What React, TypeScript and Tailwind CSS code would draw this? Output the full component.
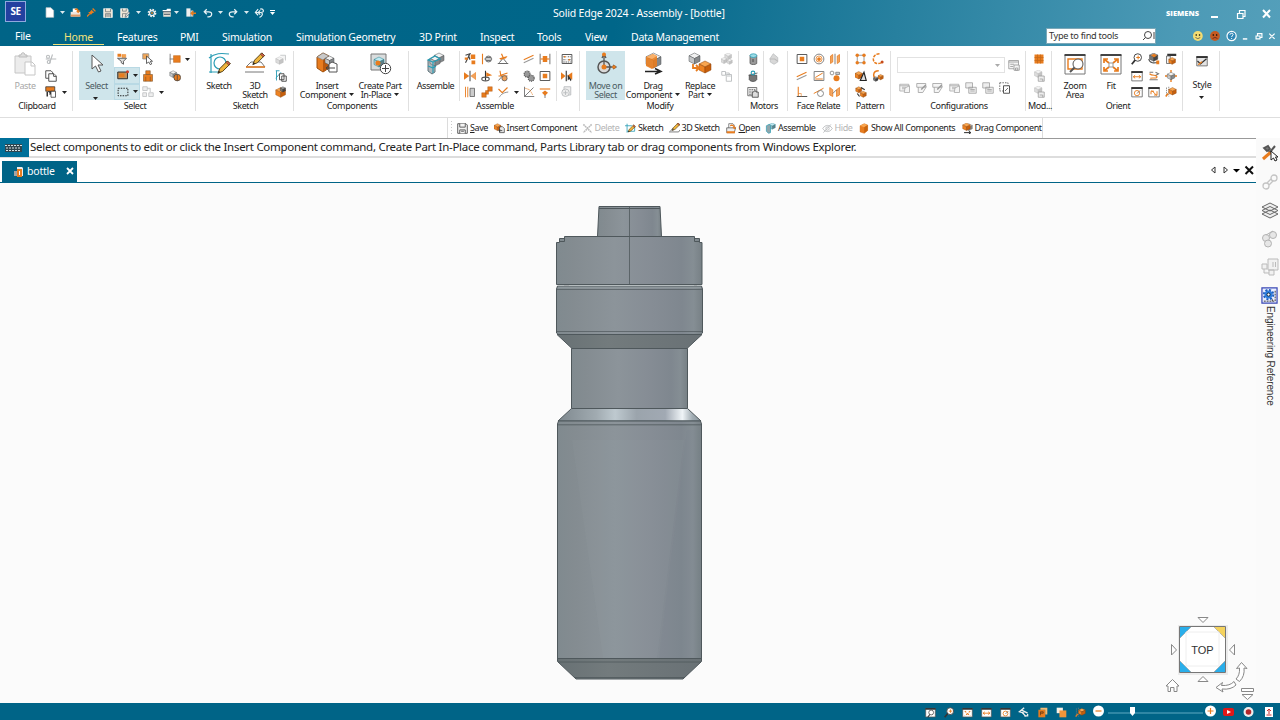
import React from "react";

const O = "#e87c1e";
const D = "#4a4a4a";
const G = "#b9bcbe";
const T = "#2a9db5";

function Cube({ x, y, s, c = "orange" }: { x: number; y: number; s: number; c?: string }) {
  const p: Record<string, string[]> = {
    orange: ["#f9a650", "#ee8322", "#c75f0c", "#8c4308"],
    gray: ["#f1f1f1", "#c4c6c8", "#85888a", "#4f5254"],
    pale: ["#f2f2f2", "#dcdcdc", "#c4c4c4", "#b0b0b0"],
    dark: ["#a8a8a8", "#777", "#444", "#2f2f2f"],
    teal: ["#bfe9f2", "#a9c3ca", "#5f7f88", "#23808f"],
  };
  const [a, b, d, e] = p[c];
  const h = s / 2;
  const q = s / 4;
  return (
    <g transform={`translate(${x} ${y})`} stroke={e} strokeWidth=".5" strokeLinejoin="round">
      <path d={`M0 ${q}L${h} 0L${s} ${q}L${h} ${h}Z`} fill={a} />
      <path d={`M0 ${q}L${h} ${h}V${s}L0 ${s - q}Z`} fill={b} />
      <path d={`M${s} ${q}L${h} ${h}V${s}L${s} ${s - q}Z`} fill={d} />
    </g>
  );
}

const Pencil = ({ t = "" }: { t?: string }) => (
  <g transform={t} strokeLinejoin="round">
    <path d="M2 14L4 9L12 1L15 4L7 12Z" fill="#efb53c" stroke="#4d3a16" />
    <path d="M10.5 2.5L12 1L15 4L13.5 5.500Z" fill="#d9604f" stroke="#4d3a16" strokeWidth=".7" />
    <path d="M2 14L3 11.300L4.700 13Z" fill="#222" />
  </g>
);

const Box = ({ c = D, f = "#fff" }: { c?: string; f?: string }) => (
  <path d="M1.500 2H14.500V14H1.500Z" fill={f} stroke={c} strokeWidth="1.200" />
);

const Win = () => (
  <g>
    <path d="M1 2H15V14.500H1Z" fill="#fff" stroke="#555" />
    <path d="M.5 1.500H15.500V4H.5Z" fill="#333" />
  </g>
);

const icons: Record<string, React.ReactNode> = {
  cut: <g fill="none" stroke={G} strokeWidth="1.500"><path d="M1 8H15M10 2L8 8L6 14" /><circle cx="4" cy="5" r="2" /><circle cx="5" cy="12" r="2" /></g>,
  copy: <g fill="#fff" stroke="#444" strokeWidth="1.200"><path d="M1 1H8L10 3V11H1Z" /><path d="M5 5H12L15 8V15H5Z" /><path d="M11.500 5V8.500H15" /></g>,
  fmt: <g><path d="M1 1H13V7H1Z" fill={O} stroke="#333" /><path d="M3 7H12V9L6 12V9Z" fill="#333" /><path d="M8 7H14V15H8Z" fill="#fff" stroke="#333" /><path d="M3 8V14" stroke="#333" strokeWidth="2" /></g>,
  filter: <g><path d="M2 1H7V5H2Z" fill={O} /><path d="M8 2H13V6H8Z" fill="#f4a14c" stroke={O} strokeWidth=".6" /><path d="M2 7H14L10 11V15L7 13V11Z" fill="#ddd" stroke="#555" strokeWidth="1.200" /></g>,
  rect: <g><path d="M1 4H14V13H1Z" fill="#c4935c" stroke="#222" strokeWidth="1.200" /><path d="M3 6H10V11H3Z" fill={O} /><circle cx="14" cy="3.500" r="2" fill="#d33d22" /></g>,
  dash: <path d="M1.500 3H14.500V13H1.500Z" fill="none" stroke="#222" strokeWidth="1.300" strokeDasharray="2 1.500" />,
  selcube: <g><path d="M1 1H9V8H1Z" fill="#f3a757" stroke="#888" /><path d="M6 4V14L9 12L11 15.500L13 14.500L11 11H14Z" fill="#fff" stroke="#333" /></g>,
  body: <g fill={O} stroke="#6e4a24" strokeWidth=".7"><path d="M5 1H11V6H5Z" /><path d="M2 6H14V15H2Z" /><path d="M5 9V15M11 9V15" fill="none" /></g>,
  ghost: <g fill="#eee" stroke={G}><path d="M1 1H7V6H1ZM1 9H6V14H1ZM9 9H15V14H9ZM7 3H11V8" /></g>,
  tag: <g><path d="M1.500 1V15M1 8H7" stroke="#777" strokeWidth="1.200" /><path d="M6 3.500H15V12.500H6Z" fill={O} stroke="#b55d0f" strokeWidth=".6" /></g>,
  pair: <g><Cube x={1} y={1} s={9} c="gray" /><circle cx="11" cy="10" r="4.500" fill={O} stroke="#444" /><path d="M11 5.500V14.500" stroke="#444" /></g>,
  paleCube: <g><Cube x={1} y={5} s={10} c="pale" /><path d="M7 3H14V10" fill="#f3f3f3" stroke={G} /></g>,
  skcopy: <g fill="none" stroke={T} strokeWidth="1.200"><path d="M1 1H6M2 1V14M1 11L8 3" /><path d="M6 5H12V13H6ZM9 8H15V15H9Z" fill="#fff" stroke="#444" /></g>,
  ballcube: <g><Cube x={1} y={2} s={13} /><Cube x={7} y={1} s={7} c="dark" /></g>,
  a1: <g><path d="M2 3L8 1L5 7L2 13M6 3L8 9" stroke="#444" fill="none" strokeWidth="1.500" /><path d="M9 2H15V8H9ZM10 10H15V15H10Z" fill={O} /><path d="M1 6H5V9H1Z" fill={O} /></g>,
  a2: <g fill="none"><path d="M2 1V15" stroke={O} strokeWidth="1.500" /><path d="M4 8H16" stroke="#888" strokeDasharray="2 1" /><circle cx="10" cy="8" r="4" fill="#ccc" stroke="#555" /><path d="M7 6H13M7 10H13" stroke="#555" /></g>,
  a3: <g><path d="M1 14H15M3 13L8 7L13 13" fill="none" stroke="#666" strokeWidth="1.300" /><path d="M6 1L9 8" stroke={O} strokeWidth="1.600" /><path d="M3 7L14 4L12 7L5 9Z" fill={O} /></g>,
  mate: <g><path d="M0 3L7 8L0 13Z" fill={O} /><path d="M16 3L9 8L16 13Z" fill="#f3a25b" stroke={O} strokeWidth=".5" /><path d="M8 1V15" stroke="#555" strokeWidth="1.500" /></g>,
  flag: <g><path d="M6 1V14" stroke="#333" strokeWidth="1.500" /><path d="M7 3L15 7L7 9Z" fill={O} /><ellipse cx="6" cy="12" rx="5" ry="2.500" fill="none" stroke="#555" strokeWidth="1.400" /></g>,
  ang: <g><path d="M4 1L5 7L14 4M2 8H14" stroke={O} strokeWidth="1.500" fill="none" /><circle cx="10" cy="11" r="3.500" fill="#f2a25a" stroke="#555" /><path d="M2 14L7 8" stroke="#555" /></g>,
  par: <g><path d="M2 1V15M5 1V15" stroke={O} strokeWidth="1.200" /><path d="M8 3H14V14H8Z" fill="#ccc" stroke="#555" /></g>,
  steps: <g fill={O} stroke="#a55412" strokeWidth=".5"><path d="M9 1H15V7H9ZM6 6H10V11H6ZM1 9H7V15H1Z" /></g>,
  arc: <g fill="none"><path d="M2 4L7 9L14 2" stroke={O} strokeWidth="1.500" /><path d="M3 15C5 12 7 9 15 8" stroke="#888" strokeWidth="1.200" /></g>,
  lines: <g strokeWidth="1.500"><path d="M1 9L14 3" stroke={O} /><path d="M1 13L14 7" stroke="#999" /></g>,
  gears: <g fill="#999" stroke="#555" strokeWidth="1.500" strokeDasharray="1.500 1"><circle cx="5.500" cy="5.500" r="4" /><circle cx="11" cy="11" r="4" /></g>,
  graph: <g fill="none" stroke="#555"><path d="M2 1V14H15M2 14L14 2" /><path d="M3 3L9 5L13 12" stroke={O} strokeDasharray="2 1" /></g>,
  between: <g><path d="M1.500 1V15M14.500 1V15" stroke="#666" strokeWidth="1.200" /><path d="M5 4H11V12H5Z" fill={O} /><path d="M2 8H14" stroke={O} strokeWidth="1.500" /></g>,
  square: <g><Box /><path d="M5 5H11V11H5Z" fill={O} /></g>,
  ground: <g><path d="M1 4H15" stroke={O} strokeWidth="1.500" /><path d="M4 9L8 6L12 9L8 13Z" fill={O} /><path d="M8 12V16" stroke="#555" /></g>,
  table: <g><Box /><path d="M3 5H7M9 5H13M3 9H7M9 9H13M3 12H13" stroke="#555" strokeWidth="1.200" strokeDasharray="2 1" /><path d="M4 4H6V6H4ZM10 8H12V10H10Z" fill={O} /></g>,
  matesel: <g><path d="M0 3L6 8L0 13Z" fill={O} /><path d="M15 3L8 8L15 13Z" fill={O} /><path d="M7 1V15" stroke="#333" strokeWidth="1.500" /><path d="M9 6V14L11 12L13 15L14 13Z" fill="#333" /></g>,
  palebox: <g fill="#eee" stroke={G} strokeWidth="1.200"><path d="M4 1H13V12H4Z" /><circle cx="6" cy="9" r="5" /><path d="M3 9H9M6 6V12" /></g>,
  pcubes: <g><Cube x={5} y={0} s={9} c="pale" /><Cube x={0} y={6} s={8} c="pale" /><Cube x={8} y={8} s={7} c="pale" /></g>,
  pswap: <g fill="none" stroke={G} strokeWidth="1.200"><path d="M7 6H14V15H7ZM1 2H6V7H1ZM6 4H11V6" /><path d="M8 8H13" /></g>,
  motor: <g><path d="M4 3V14C6 16 11 16 13 14V3Z" fill="#999" stroke="#555" /><ellipse cx="8.500" cy="3.500" rx="4.500" ry="2.500" fill="#9bdbe6" stroke={T} /><path d="M8 8V12" stroke="#333" /></g>,
  motor2: <g><path d="M3 7V13C5 16 11 16 13 13V7Z" fill="#777" stroke="#444" /><path d="M2 7L14 4" stroke="#444" /><circle cx="8" cy="4" r="2.500" fill="none" stroke={T} strokeWidth="1.500" /></g>,
  keypad: <g><path d="M1 2H13V13H1Z" fill="#eee" stroke="#555" /><path d="M3 5H12M3 8H12M3 11H9" stroke="#333" strokeDasharray="2 1" /><path d="M7 9V15H15V8H12L11 6Z" fill="#ddd" stroke="#333" /></g>,
  drop: <g><path d="M7 1L13 6V12L8 15L3 12V7Z" fill="#d8d8d8" stroke={G} /><path d="M2 8H9L13 11" stroke="#bbb" strokeWidth="1.500" fill="none" /></g>,
  circ: <g><circle cx="8" cy="8" r="6.500" fill="#fff" stroke="#777" strokeWidth="1.200" /><circle cx="8" cy="8" r="4" fill="none" stroke={O} /><circle cx="8" cy="8" r="2.500" fill={O} /></g>,
  stripes: <g><path d="M2 4L5 2V12L2 14ZM11 4L14 2V12L11 14Z" fill="#f0a35e" stroke={O} /><path d="M8 1V15" stroke="#555" /></g>,
  boxline: <g><Box c="#777" /><path d="M3 10L13 4M3 12H13" stroke={O} strokeWidth="1.300" /></g>,
  dots: <g><circle cx="4" cy="4" r="2.500" fill="#fff" stroke="#777" /><path d="M9 3H14V6H9Z" fill="#ccc" stroke="#777" /><circle cx="10" cy="11" r="4" fill={O} /></g>,
  perp: <g fill="none" strokeWidth="1.400"><path d="M3 1V14" stroke={O} /><path d="M1 14H15" stroke="#555" /><path d="M3 10H7V14" stroke={O} strokeWidth=".8" /></g>,
  tangent: <g fill="none" strokeWidth="1.300"><path d="M1 10L14 3" stroke={O} /><circle cx="10" cy="10" r="4" stroke="#888" /></g>,
  sym: <g fill="#f1a765" stroke={O}><path d="M1 2L5 5V14L1 12ZM14 2L10 5V14L14 12Z" /><path d="M5 10L10 5" stroke="#555" fill="none" /></g>,
  patt: <g fill={O}><path d="M3 3H12V13H3Z" fill="none" stroke="#777" /><circle cx="3" cy="3" r="2.300" /><circle cx="12" cy="3" r="2.300" /><circle cx="3" cy="13" r="2.300" /><circle cx="12" cy="13" r="2.300" /></g>,
  curve: <g><path d="M10 1C1 1 0 10 4 13C8 15 11 14 14 12" fill="none" stroke={O} strokeWidth="2" strokeDasharray="4 1.500" /><circle cx="13.500" cy="12" r="2" fill="#c64b1a" /></g>,
  mirror: <g><Cube x={0} y={2} s={10} /><path d="M7 14L12 3L15 14Z" fill="#ddd" stroke="#222" strokeWidth="1.500" /></g>,
  curve2: <g><path d="M9 1C0 1 1 11 6 11" fill="none" stroke={O} strokeWidth="2" /><Cube x={8} y={6} s={7} /><Cube x={2} y={9} s={6} c="dark" /></g>,
  ocubes: <g><Cube x={1} y={1} s={8} /><Cube x={7} y={7} s={8} /><path d="M3 10L6 14M8 2L13 5" stroke="#333" strokeWidth="1.500" /></g>,
  cfg: <g fill="#f5f5f5" stroke="#a3a3a3"><path d="M1 3H13V12H1ZM1 5H13M4 7H9M4 9H8" /><path d="M8 8L14 5V14H7Z" /></g>,
  cfg2: <g fill="#f5f5f5" stroke="#999"><path d="M1 2H13V7H1ZM3 7V14H9L14 6" /><path d="M7 10L13 4" strokeWidth="2" /></g>,
  cfg3: <g fill="#eee" stroke="#999"><path d="M1 1H10V8H1ZM5 7H15V15H5Z" /><path d="M7 10H13M7 12H13" /></g>,
  cfg4: <g><path d="M1 1H12V12H1Z" fill="none" stroke="#444" strokeDasharray="2 1.500" /><path d="M6 5H14V15H6Z" fill="#fff" stroke="#444" strokeWidth="1.200" /><path d="M8 12L12 8" stroke="#444" /></g>,
  listsave: <g fill="#f5f5f5" stroke="#999" strokeWidth="1.100"><path d="M1 2H14V13H1ZM1 4H14M3 7H8M3 10H7" /><path d="M8 8H15V15H8ZM10 12H13V15H10Z" /></g>,
  ogrid: <g><path d="M2 2H14V14H2Z" fill={O} /><path d="M6 2V14M10 2V14M2 6H14M2 10H14" stroke="#c46a1a" /></g>,
  pmod: <g><Cube x={2} y={0} s={10} c="pale" /><path d="M7 8H15V15H7Z" fill="#eee" stroke="#999" /><path d="M9 12H13V15" fill="none" stroke="#999" /></g>,
  zoom: <g><circle cx="9" cy="6" r="5" fill="#fff" stroke="#444" strokeWidth="1.300" /><path d="M5.500 9.500L1 15" stroke="#333" strokeWidth="2.300" /><path d="M7 6H12M9.500 3.500V8.500" stroke={O} strokeWidth="1.300" /></g>,
  rotc: <g><Cube x={2} y={0} s={11} c="dark" /><path d="M4 3L8 1L12 3L8 6Z" fill={O} /><path d="M1 8C2 14 9 14 13 12" fill="none" stroke="#555" strokeWidth="1.500" /><path d="M11 10H15V15H11Z" fill={O} /></g>,
  wincube: <g><path d="M3 1H15V4H3Z" fill="#333" /><path d="M2 4H7V14H2Z" fill="#f4f4f4" stroke="#555" /><Cube x={5} y={6} s={9} /></g>,
  width: <g><Win /><path d="M3 9H13M5.500 7L3 9L5.500 11M10.500 7L13 9L10.500 11" fill="none" stroke={O} strokeWidth="1.300" /></g>,
  spin: <g fill="none" strokeWidth="1.500"><path d="M2 3H7M10 3L14 5L9 8M2 13H13" stroke="#777" /><path d="M2 5C6 9 11 5 12 9C12 12 6 10 3 11" stroke={O} /></g>,
  cross: <g><path d="M8 0V16M0 8H16" stroke={O} strokeWidth="1.800" /><Cube x={3} y={3} s={10} c="gray" /></g>,
  wcirc: <g><Win /><circle cx="8" cy="9.500" r="3.500" fill="none" stroke={O} strokeWidth="1.200" /><path d="M8 10L12 6" stroke="#555" /></g>,
  wref: <g><Win /><path d="M4 11V7H8M12 7V12H8M5 6L12 13" fill="none" stroke={O} strokeWidth="1.300" /></g>,
  fitw: <g><Win /><path d="M4 6L12 13M12 6L4 13" stroke={O} strokeWidth="1.500" strokeDasharray="3 2" /></g>,
  zoomw: <g><Win /><circle cx="9" cy="8" r="3.500" fill="#fff" stroke="#333" /><path d="M7 11L4 15" stroke="#333" strokeWidth="1.500" /></g>,
  shade: <g><path d="M2 2V14M5 1V14" stroke="#777" strokeDasharray="2 1" /><Cube x={5} y={2} s={10} /><path d="M1 14L4 10" stroke={O} strokeWidth="2" /></g>,
  style: <g><path d="M1 2H15V14.500H1Z" fill="#e4e4e4" stroke="#555" /><path d="M.5 1.500H15.500V4H.5Z" fill="#333" /><path d="M2 8L6 12L14 5" fill="none" stroke="#333" strokeWidth="1.600" /><path d="M3 13L8 9" stroke={O} strokeWidth="2" /></g>,
  save: <g fill="#f4f4f4" stroke="#444" strokeWidth="1.200"><path d="M1 1H13L15 3V15H1Z" /><path d="M4 1V6H12V1M4 15V10H12V15M6 12H10" /></g>,
  insert: <g><Cube x={0} y={1} s={10} /><path d="M8 6L12 5L15 8V14H8Z" fill="#e6e6e6" stroke="#333" /><path d="M7 11H12M9 9L7 11L9 13" stroke="#222" fill="none" /></g>,
  del: <path d="M2 2L14 14M14 2L2 14" stroke="#bbb" strokeWidth="2.200" strokeDasharray="2.500 .8" />,
  sketch: <g><path d="M0 4H10M3 1V14M3 12H14V5" fill="none" stroke={T} strokeWidth="1.200" /><Pencil t="translate(3 2) scale(.8)" /></g>,
  sk3d: <g><path d="M0 13H14L16 10M2 12L6 7" fill="none" stroke="#666" strokeWidth="1.200" /><Pencil t="translate(3 -1) scale(.85)" /></g>,
  open: <g><path d="M4 1H10L12 3V8H4Z" fill="#fff" stroke="#555" /><path d="M1 7H14L12 14H1Z" fill="#eee" stroke="#444" /><path d="M6 3C8 1 12 2 13 6L15 5L13 9L9 7L11 6C10 4 8 4 6 5Z" fill={O} /><path d="M1 12H13V15H1Z" fill={O} /></g>,
  openW: <g><path d="M4 2H9L11 4V8H4Z" fill="#fff" /><path d="M1 7H15V14H1Z" fill="#eee6de" /><path d="M7 3C9 1 12 2 12.500 5L15 5L12 9L9 6L10.500 5.500C10 4 8 4 7 4.500Z" fill={O} /><path d="M1 11H15V14H1Z" fill="#e09a66" /></g>,
  asm: <g><Cube x={6} y={0} s={9} c="teal" /><path d="M2 4L6 2L8 4V14L5 15L2 12Z" fill="#8fa6ac" stroke={T} /></g>,
  hide: <g fill="none" stroke={G} strokeWidth="1.300"><path d="M1 8C5 2 11 2 15 8C11 14 5 14 1 8Z" /><circle cx="8" cy="8" r="2.500" /><path d="M2 14L13 2" /></g>,
  show: <g><path d="M3 4L9 1L14 3V11L9 15L3 13Z" fill={O} stroke="#c4600d" strokeWidth=".6" /><path d="M3 4L9 1L14 3L9 6Z" fill="#f9a650" /><path d="M14 3L9 6V15L14 11Z" fill="#c9650f" /></g>,
  dragc: <g><Cube x={5} y={1} s={10} c="gray" /><Cube x={1} y={0} s={11} /><path d="M3 14H12M10 12L13 14L10 16" stroke="#222" fill="none" strokeWidth="1.400" /></g>,
  page: <path d="M3 1H10L14 5V15H3Z" fill="#fff" stroke="#ccc" />,
  pin: <g><path d="M8 3L13 8L10 9L7 12L5 10L2 7L5 7Z" fill={O} /><path d="M10 1L15 6M5 10L0 15" stroke={O} strokeWidth="2.500" /></g>,
  saveW: <g fill="#f1e5d5" stroke="#fff"><path d="M1 1H13L15 3V15H1Z" /><path d="M4 1V6H12V1M4 15V9H12V15" stroke="#51606a" /><path d="M5 11H11M5 13H11" stroke="#51606a" /></g>,
  saveAs: <g fill="#f1e5d5" stroke="#fff"><path d="M1 1H12L13 3V15H1Z" /><path d="M4 1V5H10V1M4 15V9H10V15" stroke="#51606a" /><path d="M8 15L9 11L14 6L16 8L11 13Z" fill="#ddd" stroke="#51606a" /></g>,
  gearW: <g fill="none" stroke="#eee"><circle cx="8" cy="8" r="5.500" strokeWidth="3" strokeDasharray="2.500 1.800" /><circle cx="8" cy="8" r="4" strokeWidth="2" /><circle cx="8" cy="8" r="1.500" fill={O} stroke="none" /></g>,
  panelW: <g><path d="M2 4H14V14H2Z" fill="#e8e0d4" /><path d="M1 3H7L8 1H14V5H1Z" fill="#fff" /><path d="M1 6H15M3 10H13" stroke="#345" strokeWidth="1.500" /></g>,
  exitW: <g><path d="M2 2H8V14H2Z" fill="#eee" /><path d="M8 5H12V14H8Z" fill="#ccc" /><path d="M16 9H9M12 6L9 9L12 12" stroke={O} strokeWidth="2" fill="none" /></g>,
  undo: <path d="M6 2L2 6L6 10M2 6H9C16 6 15 14 9 14H7" fill="none" stroke="#e8f2f5" strokeWidth="2" />,
  redo: <path d="M10 2L14 6L10 10M14 6H7C0 6 1 14 7 14H9" fill="none" stroke="#e8f2f5" strokeWidth="2" />,
  undo2: <path d="M6 3L2 8L6 12M2 8H10C16 8 14 2 9 3M9 5L6 8L9 11M10 8C14 9 12 14 8 15" fill="none" stroke="#e8f2f5" strokeWidth="1.700" />,
  hand: <path d="M9 1L2 7L9 9M6 5L14 9M6 8L12 14M9 13H14V10" fill="none" stroke="#eee" strokeWidth="1.900" />,
  pbox: <g><path d="M2 4H12V15H2Z" fill={O} /><path d="M5 1H15V11H12V4H5Z" fill="#f5bd77" /><path d="M5 12V7H9V9H5" fill="none" stroke="#553011" /></g>,
  two: <g><path d="M1 1H10V9H1Z" fill="#f6efe5" /><path d="M5 5H15V15H5Z" fill="#f0953a" /></g>,
};

function Ic({ n, c = "size-3" }: { n: string; c?: string }) {
  return <svg viewBox="0 0 16 16" className={`${c} shrink-0`}>{icons[n]}</svg>;
}

const Arrow = ({ c = "text-[#222]" }: { c?: string }) => (
  <svg viewBox="0 0 5 3" className={`h-[3px] w-[5px] shrink-0 ${c}`}><path d="M0 0H5L2.500 3Z" fill="currentColor" /></svg>
);

function Group({ w, label, children }: { w: string; label: string; children: React.ReactNode }) {
  return (
    <section className={`flex h-full shrink-0 flex-col pt-[5px] ${w}`}>
      <div className="flex h-[60px] flex-col border-r border-[#e0e0e0]">
        <div className="flex h-[49px] shrink-0">{children}</div>
        <div className="h-[12px] shrink-0 pl-[2px] text-center text-[9px] leading-[12px] tracking-[-0.38px] whitespace-nowrap text-[#222]">{label}</div>
      </div>
    </section>
  );
}

function Col({ w, items }: { w: string; items: string[] }) {
  return (
    <div className={`flex shrink-0 flex-col items-center ${w}`}>
      {items.map((n, i) => (
        <div key={i} className="flex h-[16.500px] shrink-0 items-center justify-center">
          {n === ">" ? <Arrow /> : n ? <Ic n={n} /> : null}
        </div>
      ))}
    </div>
  );
}

function Big({ w, lines, children, arrow, hot, dim }: { w: string; lines: string[]; children: React.ReactNode; arrow?: "in" | "below"; hot?: boolean; dim?: boolean }) {
  return (
    <div className={`flex shrink-0 flex-col items-center ${w} ${hot ? "bg-[#cfe5eb]" : ""}`}>
      <svg viewBox="0 0 24 24" className="mt-[1px] size-6 shrink-0">{children}</svg>
      <div className={`mt-[5px] flex flex-col items-center text-[9px] leading-[9px] tracking-[-0.4px] whitespace-nowrap ${dim ? "text-[#a8a8a8]" : hot ? "text-[#4b5b62]" : "text-[#222]"}`}>
        {lines.map((l, i) => (
          <div key={l} className="flex h-[9px] items-center gap-[3px]">
            {l}
            {arrow === "in" && i === lines.length - 1 && <Arrow />}
          </div>
        ))}
      </div>
      {arrow === "below" && <div className="mt-[7px] mr-[2px] flex"><Arrow /></div>}
    </div>
  );
}

const Rule = () => <div className="h-[50px] w-px shrink-0 bg-[#e0e0e0]" />;

const menu: [string, string][] = [
  ["Features", "w-[63px]"],
  ["PMI", "w-[42px]"],
  ["Simulation", "w-[74px]"],
  ["Simulation Geometry", "w-[123px]"],
  ["3D Print", "w-[61px]"],
  ["Inspect", "w-[57px]"],
  ["Tools", "w-[48px]"],
  ["View", "w-[46px]"],
  ["Data Management", "w-[100px]"],
];

function TitleBar() {
  return (
    <div className="flex h-6 items-start">
      <div className="ml-[5px] mt-[1px] flex h-[21px] w-[21px] items-center justify-center border border-[#8fa9dd] bg-[#2340a0] text-[10px] font-bold tracking-[-0.5px] text-white">SE</div>
      <div className="flex h-[25px] w-[255px] items-center pl-[18px]">
        <div className="w-[15.500px]"><Ic n="page" c="size-[11px]" /></div>
        <div className="w-[10.500px]"><Arrow c="text-[#dbe9ee]" /></div>
        <div className="w-[16.500px]"><Ic n="openW" c="size-[11px]" /></div>
        <div className="w-[16.500px]"><Ic n="pin" c="size-[9px]" /></div>
        <div className="w-[17px]"><Ic n="saveW" c="size-[10px]" /></div>
        <div className="w-[16px]"><Ic n="saveAs" c="size-[10px]" /></div>
        <div className="w-[11px]"><Arrow c="text-[#dbe9ee]" /></div>
        <div className="w-[15px]"><Ic n="gearW" c="size-[10px]" /></div>
        <div className="w-[12px]"><Ic n="panelW" c="size-[10px]" /></div>
        <div className="w-[11px]"><Arrow c="text-[#dbe9ee]" /></div>
        <div className="w-[18px]"><Ic n="exitW" c="size-[11px]" /></div>
        <div className="w-[15px]"><Ic n="undo" c="size-[10px]" /></div>
        <div className="w-[10px]"><Arrow c="text-[#dbe9ee]" /></div>
        <div className="w-[16px]"><Ic n="redo" c="size-[10px]" /></div>
        <div className="w-[10px]"><Arrow c="text-[#dbe9ee]" /></div>
        <div className="w-[16px]"><Ic n="undo2" c="size-[11px]" /></div>
        <div className="flex flex-col gap-px"><div className="h-px w-[5px] bg-white" /><Arrow c="text-white" /></div>
      </div>
      <div className="flex h-[28px] flex-1 items-center pl-[272px] text-[10.500px] tracking-[-0.19px] whitespace-nowrap text-white">Solid Edge 2024 - Assembly - [bottle]</div>
      <div className="flex h-[27px] w-[114px] items-center">
        <span className="w-[45px] font-['Open_Sans',sans-serif] text-[7.500px] font-extrabold text-white">SIEMENS</span>
        <svg viewBox="0 0 66 14" className="h-[14px] w-[66px]" fill="none" stroke="#fff">
          <path d="M0 10H7" strokeWidth="2" />
          <path d="M26.500 6.500H32V11.500H26.500ZM28.500 6V3.500H34V9.500H32" strokeWidth="1.200" />
          <path d="M52 3L59 10.500M59 3L52 10.500" strokeWidth="2" />
        </svg>
      </div>
    </div>
  );
}

function MenuBar() {
  return (
    <div className="flex h-[22px] text-[10.500px] tracking-[-0.28px] text-white">
      <div className="flex h-[21px] w-[53px] shrink-0 items-center pt-[4px] pl-[15px]">File</div>
      <div className="mr-[13px] flex h-[21px] w-[51px] shrink-0 items-center justify-center border-b border-[#f3e27a] pt-[7px] text-[#f3e27a]">Home</div>
      {menu.map(([m, c]) => (
        <div key={m} className={`flex h-[21px] shrink-0 items-center pt-[7px] whitespace-nowrap ${c}`}>{m}</div>
      ))}
      <div className="ml-auto flex w-[234px]">
        <div className="mt-[4px] flex h-[16px] w-[110px] items-center justify-between border border-[#7ba8b8] bg-white pl-[2px] text-[9.200px] tracking-[-0.3px] text-[#333]">
          Type to find tools
          <svg viewBox="0 0 14 12" className="h-3 w-3.5" fill="none" stroke="#444"><circle cx="7" cy="5" r="3.500" /><path d="M4.500 7.500L2 10M13 2V9" /></svg>
        </div>
        <svg viewBox="0 0 90 12" className="mt-[6px] ml-[36px] h-3 w-[88px] overflow-visible">
          <g strokeWidth=".8">
            <circle cx="6" cy="6" r="5" fill="#f4dc72" /><path d="M3.500 7.500Q6 10 8.500 7.500" fill="none" stroke="#555" /><circle cx="4.300" cy="5" r=".8" /><circle cx="7.700" cy="5" r=".8" />
            <circle cx="23.500" cy="6" r="5" fill="#c55a22" /><path d="M21 8.500Q23.500 6.500 26 8.500" fill="none" stroke="#522" /><circle cx="21.800" cy="5" r=".8" /><circle cx="25.200" cy="5" r=".8" />
            <circle cx="40.500" cy="6" r="4.700" fill="#2e86b5" stroke="#fff" strokeWidth="1.200" />
          </g>
          <path d="M38.800 4.700C39 2.500 42.300 2.800 42 4.700C41.800 5.800 40.500 5.800 40.500 7M40.500 8V9" stroke="#fff" fill="none" />
          <g fill="none" stroke="#fff"><path d="M52 9H56.500" strokeWidth="1.500" /><path d="M65.500 6H69.500V9H65.500ZM67 6V3.500H71.500V7.500H70M79 3.500L84.500 9M84.500 3.500L79 9" strokeWidth="1.200" /></g>
        </svg>
      </div>
    </div>
  );
}

function Ribbon() {
  return (
    <div className="flex h-[72px] border-b border-[#dedede] bg-white">
      <Group w="w-[73px]" label="Clipboard">
        <Big w="w-[42px] ml-[4px]" lines={["Paste"]} dim>
          <path d="M2 4H18V21H2Z" fill="#ececec" stroke="#c6c6c6" /><path d="M6 5V3H8C8 0 12 0 12 3H14V5Z" fill="#ddd" stroke="#bbb" /><path d="M12 10H19L22 13V23H12Z" fill="#fff" stroke="#c6c6c6" /><path d="M18 10V14H22" fill="none" stroke="#c6c6c6" />
        </Big>
        <Col w="w-[10px]" items={["cut", "copy", "fmt"]} />
        <Col w="w-[16px]" items={["", "", ">"]} />
      </Group>
      <Group w="w-[123px]" label="Select">
        <Big w="w-[35px] ml-[6px]" lines={["Select"]} arrow="below" hot>
          <path d="M7 3V17L10.500 14L13.500 20L16 19L13 13H18Z" fill="#fff" stroke="#555" />
        </Big>
        <div className="flex w-[26px] shrink-0 flex-col">
          {["filter", "rect", "dash"].map((n, i) => (
            <div key={n} className={`flex h-[16.500px] items-center gap-[4px] pl-[2px] ${i ? "border border-[#b9d9e4] bg-[#cfe5eb]" : ""}`}>
              <Ic n={n} />{i > 0 && <Arrow />}
            </div>
          ))}
        </div>
        <Col w="w-[15px]" items={["selcube", "body", "ghost"]} />
        <Col w="w-[12px]" items={["", "", ">"]} />
        <Col w="w-[15px]" items={["tag", "pair"]} />
        <Col w="w-[10px]" items={[">"]} />
      </Group>
      <Group w="w-[98px]" label="Sketch">
        <Big w="w-[36px] ml-[5px]" lines={["Sketch"]}>
          <g fill="none" stroke={T} strokeWidth="1.200"><path d="M2 6C8 1 14 1 22 2M4 2V21M2 20H12" /><circle cx="13" cy="11" r="6" /></g><Pencil t="translate(9 8) scale(.95)" />
        </Big>
        <Big w="w-[36px]" lines={["3D", "Sketch"]}>
          <path d="M3 15L8 10H18L22 15ZM2 20H21" fill="none" stroke="#777" /><path d="M3 15H22" stroke={O} strokeWidth="1.500" /><Pencil t="translate(8 0) scale(.9)" />
        </Big>
        <Col w="w-[16px]" items={["paleCube", "skcopy", "ballcube"]} />
      </Group>
      <Group w="w-[115px]" label="Components">
        <Big w="w-[56px] ml-[5px]" lines={["Insert", "Component"]} arrow="in">
          <path d="M2 5L8 1L14 4V16L8 20L2 16Z" fill={O} stroke="#9c4f0c" /><path d="M2 5L8 1L14 4L8 8Z" fill="#c9c9c9" stroke="#777" strokeWidth=".6" /><path d="M14 4L8 8V20L14 16Z" fill="#b9590e" /><Cube x={10} y={4} s={9} c="gray" /><path d="M14 12L17 10L22 12V20H14Z" fill="#fff" stroke="#555" /><path d="M20 16H11M14 13.500L11 16L14 18.500" fill="none" stroke="#444" />
        </Big>
        <Big w="w-[50px]" lines={["Create Part", "In-Place"]} arrow="in">
          <path d="M3 2H18V18H3Z" fill="#d9dcdd" stroke="#777" /><Cube x={6} y={5} s={10} c="teal" /><circle cx="10" cy="11" r="2.500" fill={O} /><circle cx="17.500" cy="16.500" r="5.200" fill="#fff" stroke="#444" /><path d="M14 16.500H21M17.500 13V20" stroke="#444" />
        </Big>
      </Group>
      <Group w="w-[171px]" label="Assemble">
        <Big w="w-[47px] ml-[3px]" lines={["Assemble"]}>
          <path d="M4 8L11 5V20L8 22L4 19Z" fill="#b1b7ba" stroke="#60757c" /><Cube x={10} y={1} s={10} c="gray" /><Cube x={6} y={4} s={10} c="gray" /><path d="M4 8L11 4L16 7L9 10ZM4 14L9 16L12 14M9 10V21" fill="none" stroke={T} strokeWidth="1.200" />
        </Big>
        <Rule />
        <Col w="w-[19px]" items={["a1", "mate", "par"]} />
        <Col w="w-[15px]" items={["a2", "flag", "steps"]} />
        <Col w="w-[17px]" items={["a3", "ang", "arc"]} />
        <Col w="w-[10px]" items={["", "", ">"]} />
        <Col w="w-[15px]" items={["lines", "gears", "graph"]} />
        <Col w="w-[17px]" items={["between", "square", "ground"]} />
        <div className="w-[3px]" />
        <Rule />
        <Col w="w-[20px]" items={["table", "matesel", "palebox"]} />
      </Group>
      <Group w="w-[159px]" label="Modify">
        <Big w="w-[39px] ml-[6px]" lines={["Move on", "Select"]} hot>
          <circle cx="10" cy="15" r="6" fill="#d9d9d9" stroke="#555" strokeWidth="1.500" /><path d="M10 15V4M10 15H21M8 6L10 2L12 6M19 13L22 15L19 17" fill="none" stroke="#555" strokeWidth="1.300" /><circle cx="10" cy="2.500" r="2" fill={O} /><circle cx="20" cy="15" r="1.800" fill={O} /><circle cx="10" cy="15" r="2.500" fill={O} />
        </Big>
        <Big w="w-[56px]" lines={["Drag", "Component"]} arrow="in">
          <Cube x={5} y={1} s={15} c="gray" /><path d="M5 5L12 2L16 4V14L11 17L5 14Z" fill={O} opacity=".9" /><path d="M5 5L12 2L16 4L11 7Z" fill="#f8b06a" /><path d="M4 19.500H18M14 16.500L20 19.500L14 22" fill="none" stroke="#222" strokeWidth="1.500" />
        </Big>
        <Big w="w-[38px]" lines={["Replace", "Part"]} arrow="in">
          <Cube x={1} y={1} s={11} c="gray" /><Cube x={11} y={9} s={12} /><path d="M5 12V16H10M8 13L11 16L8 19" fill="none" stroke={O} strokeWidth="1.800" />
        </Big>
        <Col w="w-[15px]" items={["pcubes", "pswap"]} />
      </Group>
      <Group w="w-[49px]" label="Motors">
        <Col w="w-[24px] pl-[3px]" items={["motor", "motor2", "keypad"]} />
        <Rule />
        <Col w="w-[20px]" items={["drop"]} />
      </Group>
      <Group w="w-[60px]" label="Face Relate">
        <Col w="w-[16px] ml-[6px]" items={["square", "lines", "perp"]} />
        <Col w="w-[17px]" items={["circ", "boxline", "tangent"]} />
        <Col w="w-[16px]" items={["stripes", "dots", "sym"]} />
      </Group>
      <Group w="w-[43px]" label="Pattern">
        <Col w="w-[16px] ml-[5px]" items={["patt", "mirror", "ocubes"]} />
        <Col w="w-[17px]" items={["curve", "curve2"]} />
      </Group>
      <Group w="w-[135px]" label="Configurations">
        <div className="flex flex-col pl-[6px] pt-[6px]">
          <div className="flex h-4 items-center gap-[3px]">
            <div className="flex h-4 w-[108px] items-center justify-end border border-[#e2e2e2] pr-[4px]"><Arrow c="text-[#aaa]" /></div>
            <Ic n="listsave" />
          </div>
          <div className="flex gap-[4.600px] pl-[2px] pt-[9px]">
            {["cfg", "cfg2", "cfg2", "cfg", "cfg3", "cfg3", "cfg4"].map((n, i) => <Ic key={i} n={n} />)}
          </div>
        </div>
      </Group>
      <Group w="w-[26px]" label="Mod...">
        <Col w="w-[26px]" items={["ogrid", "pmod", "pmod"]} />
      </Group>
      <Group w="w-[131px]" label="Orient">
        <Big w="w-[36px] ml-[5px]" lines={["Zoom", "Area"]}>
          <path d="M2 3H22V22H2Z" fill="#fff" stroke="#777" /><path d="M1.500 2H22.500V4H1.500Z" fill="#444" /><path d="M5 7H19V17H5Z" fill="none" stroke={O} strokeWidth="1.400" /><circle cx="15" cy="12" r="5" fill="#fff" stroke="#555" /><path d="M11.500 15.500L7 20" stroke="#555" strokeWidth="2" />
        </Big>
        <Big w="w-[36px]" lines={["Fit"]}>
          <path d="M2 3H22V22H2Z" fill="#fff" stroke="#777" /><path d="M1.500 2H22.500V4H1.500Z" fill="#444" /><path d="M5 11V7H9M15 7H19V11M5 15V19H9M15 19H19V15M5 7L10 11M19 7L14 11M5 19L10 15M19 19L14 15" fill="none" stroke={O} strokeWidth="1.700" /><path d="M10 11H14V15H10Z" fill="none" stroke="#999" />
        </Big>
        <Col w="w-[16px]" items={["zoom", "width", "wcirc"]} />
        <Col w="w-[17px]" items={["rotc", "spin", "wref"]} />
        <Col w="w-[17px]" items={["wincube", "cross", "shade"]} />
      </Group>
      <Group w="w-[37px]" label="">
        <div className="flex w-full flex-col items-center pt-[4px] pl-[2px] text-[9px] leading-[9px] tracking-[-0.2px] text-[#222]">
          <Ic n="style" />
          <div className="mt-[13px]">Style</div>
          <div className="mt-[7px] mr-[2px] flex"><Arrow /></div>
        </div>
      </Group>
    </div>
  );
}

const quick: [string, string, string, string, boolean][] = [
  ["save", "S", "ave", "w-[36.500px]", false],
  ["insert", "", "Insert Component", "w-[88px]", false],
  ["del", "", "Delete", "w-[43.500px]", true],
  ["sketch", "", "Sketch", "w-[43.500px]", false],
  ["sk3d", "", "3D Sketch", "w-[57px]", false],
  ["open", "O", "pen", "w-[39.500px]", false],
  ["asm", "", "Assemble", "w-[56.500px]", false],
  ["hide", "", "Hide", "w-[36.500px]", true],
  ["show", "", "Show All Components", "w-[103.500px]", false],
  ["dragc", "", "Drag Component", "w-[80px]", false],
];

function QuickBar() {
  return (
    <div className="flex h-[20px] bg-white">
      <div className="ml-[447px] flex w-[596px] items-center border-x border-[#dcdcdc]">
        <div className="mr-[3px] ml-[2px] h-4 w-[4px] shrink-0 bg-[radial-gradient(#c9c9c9_0.7px,transparent_0.8px)] bg-[size:3px_3px]" />
        {quick.map(([n, u, t, w, dim]) => (
          <div key={n} className={`flex shrink-0 items-center gap-[2px] text-[9px] tracking-[-0.42px] whitespace-nowrap ${w} ${dim ? "text-[#b5b5b5]" : "text-[#222]"}`}>
            <Ic n={n} c="size-[11px]" />
            <span><span className="underline">{u}</span>{t}</span>
          </div>
        ))}
      </div>
    </div>
  );
}

function Bottle() {
  return (
    <svg viewBox="556 205 147 476" className="mt-[22px] ml-[556px] h-[476px] w-[147px]">
      <defs>
        <linearGradient id="m"><stop offset="0" stopColor="#808a8f" /><stop offset=".12" stopColor="#848c91" /><stop offset=".4" stopColor="#8c949a" /><stop offset=".65" stopColor="#868d95" /><stop offset=".86" stopColor="#7f878f" /><stop offset=".94" stopColor="#858e94" /><stop offset="1" stopColor="#778085" /></linearGradient>
        <linearGradient id="sh"><stop offset="0" stopColor="#7e888e" /><stop offset=".27" stopColor="#a1abb1" /><stop offset=".4" stopColor="#bec9cf" /><stop offset=".55" stopColor="#9ba4ac" /><stop offset=".75" stopColor="#a1a9b3" /><stop offset=".87" stopColor="#eff4f7" /><stop offset=".94" stopColor="#a2adb4" /><stop offset="1" stopColor="#87939a" /></linearGradient>
        <linearGradient id="dk"><stop offset="0" stopColor="#687174" /><stop offset=".35" stopColor="#737b7d" /><stop offset="1" stopColor="#697175" /></linearGradient>
        <linearGradient id="lt"><stop offset="0" stopColor="#7d868a" /><stop offset=".35" stopColor="#8d969b" /><stop offset=".6" stopColor="#d5dde2" /><stop offset=".78" stopColor="#8d969b" /><stop offset="1" stopColor="#7d868a" /></linearGradient>
      </defs>
      <g stroke="#4f585c" strokeWidth="1">
        <path d="M599 206.500H660L661.500 236.500H597.500Z" fill="url(#m)" />
        <path d="M599 208.500H660" />
        <path d="M556.500 284.500V242.500H559.500V238.500H564.500V236.500H694.500V238.500H699.500V242.500H702V284.500Z" fill="url(#m)" />
        <path d="M559.500 241.500H564.500V237M699.500 241.500H694.500V237" fill="none" />
        <path d="M629.500 206V284" strokeWidth=".8" />
        <path d="M557.500 286H701.500L702.500 289V333L699 336H560L556.500 333V289Z" fill="url(#m)" />
        <path d="M558 285.500H564M569 285.500H694M697 285.500H701" stroke="#b9c0c3" strokeWidth=".8" />
        <path d="M558 287.500H701" stroke="#8e979b" strokeWidth="1.500" />
        <path d="M557 289.500H702M557 331.500H702" strokeWidth=".7" />
        <path d="M557 334.500H702L687 348.500H572Z" fill="url(#dk)" />
        <path d="M571.500 348.500H687.500V408.500H571.500Z" fill="url(#m)" />
        <path d="M571.500 408.500H687.500L701 421H558Z" fill="url(#sh)" />
        <path d="M557.500 424L558.500 421H700.500L701.500 424V660H557.500Z" fill="url(#m)" />
        <path d="M559 422.500H700" stroke="url(#lt)" strokeWidth="2" />
        <path d="M558 424.800H701" strokeWidth=".8" />
        <path d="M557.500 658.500H701.500V661.500L683 679H576L557.500 661.500Z" fill="url(#dk)" />
        <path d="M558 662H701M574 677.500H685" strokeWidth=".8" />
      </g>
      <path d="M572 440L603 658H657L684 440Z" fill="#b9c6cd" opacity=".05" />
      <path d="M659 658L687 430H700V658Z" fill="#5b7180" opacity=".05" />
    </svg>
  );
}

function ViewCube() {
  return (
    <svg viewBox="1160 610 110 92" className="absolute right-[10px] bottom-[1px] h-[92px] w-[110px]">
      <path d="M1178 625H1228V675H1178Z" fill="#bbb" opacity=".25" />
      <path d="M1179.500 626.500H1225.500V672.500H1179.500Z" fill="#fff" stroke="#777" />
      <path d="M1180 627H1191L1180 638ZM1180 672H1191L1180 661ZM1225 672H1214L1225 661Z" fill="#2aaeea" />
      <path d="M1225 627H1214L1225 638Z" fill="#f5d35e" />
      <path d="M1191 627L1180 638M1214 627L1225 638M1180 661L1191 672M1225 661L1214 672" stroke="#999" strokeWidth=".6" />
      <path d="M1186 632H1219V666H1186Z" fill="none" stroke="#eee" />
      <text x="1202.500" y="653.500" textAnchor="middle" fontSize="11" fontFamily="Liberation Sans, sans-serif" fill="#333">TOP</text>
      <g fill="#fff" stroke="#888">
        <path d="M1198 617.500H1208L1203 622.500ZM1198 681.500H1208L1203 676.500ZM1171.500 644.500V655L1176.500 650ZM1234.500 644.500V655L1229.500 650Z" />
        <path d="M1166 686L1172.500 679.500L1179 686H1177V691.500H1174V687.500H1170.500V691.500H1168V686Z" />
        <path d="M1241.500 662.500L1247 668.500L1244 668Q1245 676 1239.500 681.500L1236 679Q1240 675 1239.500 668L1236.500 668.500Z" />
        <path d="M1216 687.500L1222.500 682.500L1221.500 685.500Q1230 686 1234 681.500L1236 685Q1231 690 1222 689L1223 692Z" />
        <path d="M1241.500 688.500H1253.500V691.500H1241.500ZM1242 694.500H1253L1247.500 699.500Z" />
      </g>
    </svg>
  );
}

function Dock() {
  return (
    <aside className="flex w-6 shrink-0 flex-col items-center bg-[#fafafa] pt-[6px] pl-[3px]">
      <svg viewBox="0 0 18 18" className="h-[18px] w-[18px]"><path d="M3 4L7 2L9 5L6 7ZM7 6L15 15" stroke="#555" fill="#777" strokeWidth="1.800" /><path d="M10 8L2 15" stroke={O} strokeWidth="3" /><path d="M9 8L14 2" stroke="#555" strokeWidth="2" /><path d="M10 7V16L12.500 14L14 17L16 16L14.500 13H17Z" fill="#fff" stroke="#222" /></svg>
      <svg viewBox="0 0 18 18" className="mt-[11px] h-[18px] w-[18px]" fill="none" stroke="#c4c4c4" strokeWidth="1.300"><circle cx="13" cy="5" r="3" /><circle cx="5" cy="13" r="3" /><path d="M10 6L6 10M12 8L8 12" /></svg>
      <svg viewBox="0 0 18 18" className="mt-[10px] h-[18px] w-[18px]" fill="#eee" stroke="#666"><path d="M1 13L9 9L17 13L9 17ZM1 9.500L9 5.500L17 9.500L9 13.500ZM1 6L9 2L17 6L9 10Z" /></svg>
      <svg viewBox="0 0 18 18" className="mt-[11px] h-[18px] w-[18px]" fill="#e6e6e6" stroke="#b3b3b3"><circle cx="12" cy="5" r="3.500" /><circle cx="5" cy="8" r="3.500" /><circle cx="7" cy="13.500" r="3.500" /><path d="M5 5L12 1" /></svg>
      <svg viewBox="0 0 18 18" className="mt-[10px] h-[18px] w-[18px]" fill="#f1f1f1" stroke="#bbb"><path d="M7 1H17V12H7ZM1 6H6V11H1ZM8 12H13V17H8ZM3 11V15H8M12 4V9M14.500 4V9" /></svg>
      <svg viewBox="0 0 18 18" className="mt-[11px] h-[17px] w-[17px]"><path d="M1 1H17V17H1Z" fill="#e9eeff" stroke="#3a48b5" strokeWidth="1.300" /><circle cx="8" cy="8" r="4.200" fill="#2e7fe0" /><circle cx="8" cy="8" r="5" fill="none" stroke="#1d5fc1" strokeWidth="2" strokeDasharray="2.200 1.700" /><circle cx="8" cy="8" r="1.700" fill="#fff" stroke="#123" /><path d="M3 15H15V3M12 13V16" fill="none" stroke="#333" strokeDasharray="2 1" /></svg>
      <div className="mt-[2px] font-['Liberation_Sans',sans-serif] text-[10px] leading-[12px] tracking-[-0.13px] whitespace-nowrap text-[#333] [writing-mode:vertical-rl]">Engineering Reference</div>
    </aside>
  );
}

function StatusBar() {
  return (
    <footer className="flex h-[17px] shrink-0 items-center bg-[#006487] pt-[1px] pl-[925px]">
      {["zoomw", "zoom", "fitw", "width", "wcirc", "hand", "pbox", "two", "shade"].map((n) => (
        <div key={n} className="w-[18.700px] shrink-0"><Ic n={n} c="size-[11px]" /></div>
      ))}
      <svg viewBox="0 0 187 16" className="h-4 w-[187px] shrink-0">
        <circle cx="5.500" cy="7" r="5.500" fill="#fff" /><path d="M2.500 7H8.500" stroke={O} strokeWidth="1.200" />
        <path d="M15 9H110" stroke="#5fa9c2" /><path d="M37 3H42V9L39.500 12L37 9Z" fill="#fff" />
        <circle cx="117.500" cy="7" r="5.500" fill="#fff" /><path d="M114.500 7H120.500M117.500 4V10" stroke={O} strokeWidth="1.200" />
        <rect x="130" y="4" width="11" height="8" rx="2" fill="#e01818" /><path d="M134 6V10L138 8Z" fill="#fff" />
        <circle cx="155.500" cy="8" r="5" fill="#eee" /><circle cx="155.500" cy="8" r="2.800" fill="#b3262a" />
        <path d="M172 3H180V13H172Z" fill="#fff" /><path d="M176 10V5M174 7L176 5L178 7M173.500 11H178.500" stroke="#c93030" fill="none" />
      </svg>
    </footer>
  );
}

export default function App() {
  return (
    <div className="flex h-[720px] w-[1280px] flex-col overflow-hidden bg-white font-['Noto_Sans',sans-serif]">
      <header className="h-[46px] shrink-0 bg-[linear-gradient(98deg,#006487_0%,#006689_48%,#27809f_70%,#4c9ab6_92%,#549fba_100%)]">
        <TitleBar />
        <MenuBar />
      </header>
      <div className="shrink-0"><Ribbon /></div>
      <div className="shrink-0"><QuickBar /></div>
      <div className="flex min-h-0 flex-1">
        <div className="flex min-w-0 flex-1 flex-col">
          <div className="flex h-[20px] shrink-0 items-center border-t border-b-2 border-t-[#999] border-b-[#ddd] bg-white text-[11.500px] tracking-[-0.29px] text-[#222]">
            <div className="flex h-[19px] w-[29px] shrink-0 items-center justify-center bg-[#00709a] pr-[3px]">
              <svg viewBox="0 0 17 8" className="h-2 w-[17px]"><path d="M0 0H17V8H0Z" fill="#31464f" /><path d="M0 1.500H17M1 4H16M1 6.500H16" stroke="#d8e3e6" strokeDasharray="2 1" /></svg>
            </div>
            <span className="pb-[2px] pl-[1px] whitespace-nowrap">Select components to edit or click the Insert Component command, Create Part In-Place command, Parts Library tab or drag components from Windows Explorer.</span>
          </div>
          <div className="flex h-[25px] shrink-0 items-end border-b border-[#006487] bg-white">
            <div className="ml-[2px] flex h-[21px] w-[75px] items-center bg-[#006487] text-[10.500px] tracking-[-0.2px] text-white">
              <svg viewBox="0 0 10 10" className="ml-[12px] size-[10px]"><path d="M0 4H4V9H0Z" fill="#a3a3a3" /><path d="M3 0H8L9 1V9H3Z" fill="#eee" /><path d="M3 2H8V10H3Z" fill={O} /><path d="M5 4H6V8H5Z" fill="#fff" /></svg>
              <span className="ml-[3px]">bottle</span>
              <svg viewBox="0 0 8 8" className="mt-[-2px] mr-[3px] ml-auto size-2"><path d="M1 1L7 7M7 1L1 7" stroke="#fff" strokeWidth="1.800" /></svg>
            </div>
            <svg viewBox="0 0 50 12" className="mb-[6px] ml-auto h-3 w-[50px]">
              <path d="M9 3V9L5.500 6ZM18 3V9L21.500 6Z" fill="#fff" stroke="#333" /><path d="M27 5H34L30.500 8.500Z" /><path d="M39.500 2.500L47 10M47 2.500L39.500 10" stroke="#111" strokeWidth="2" />
            </svg>
          </div>
          <main className="min-h-0 flex-1 bg-[#fbfbfb]"><Bottle /></main>
        </div>
        <div className="relative flex bg-[#fbfbfb]">
          <Dock />
          <ViewCube />
        </div>
      </div>
      <StatusBar />
    </div>
  );
}
